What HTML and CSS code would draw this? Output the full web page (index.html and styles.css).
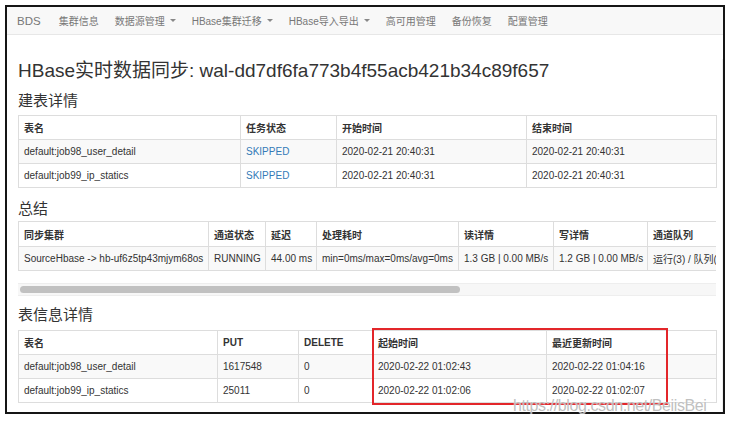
FILE: index.html
```html
<!DOCTYPE html>
<html lang="zh-CN">
<head>
<meta charset="utf-8">
<title>HBase实时数据同步</title>
<link rel="stylesheet" href="styles.css">
</head>
<body>
<div class="frame">
  <nav class="navbar">
    <span class="brand">BDS</span>
    <ul class="nav">
      <li>集群信息</li>
      <li>数据源管理<b class="caret"></b></li>
      <li>HBase集群迁移<b class="caret"></b></li>
      <li>HBase导入导出<b class="caret"></b></li>
      <li>高可用管理</li>
      <li>备份恢复</li>
      <li>配置管理</li>
    </ul>
  </nav>
  <main class="content">
    <h2 class="page-title">HBase实时数据同步: wal-dd7df6fa773b4f55acb421b34c89f657</h2>

    <h3 class="section-title s1">建表详情</h3>
    <table class="grid t1">
      <colgroup><col class="c1a"><col class="c1b"><col class="c1c"><col class="c1d"></colgroup>
      <thead><tr><th>表名</th><th>任务状态</th><th>开始时间</th><th>结束时间</th></tr></thead>
      <tbody>
        <tr class="odd"><td>default:job98_user_detail</td><td><a class="link">SKIPPED</a></td><td>2020-02-21 20:40:31</td><td>2020-02-21 20:40:31</td></tr>
        <tr><td>default:job99_ip_statics</td><td><a class="link">SKIPPED</a></td><td>2020-02-21 20:40:31</td><td>2020-02-21 20:40:31</td></tr>
      </tbody>
    </table>

    <h3 class="section-title s2">总结</h3>
    <div class="scroll-wrap">
      <table class="grid t2">
        <colgroup><col class="c2a"><col class="c2b"><col class="c2c"><col class="c2d"><col class="c2e"><col class="c2f"><col class="c2g"><col class="c2h"></colgroup>
        <thead><tr><th>同步集群</th><th>通道状态</th><th>延迟</th><th>处理耗时</th><th>读详情</th><th>写详情</th><th>通道队列</th><th>同步位点</th></tr></thead>
        <tbody>
          <tr class="odd"><td>SourceHbase -&gt; hb-uf6z5tp43mjym68os</td><td>RUNNING</td><td>44.00 ms</td><td>min=0ms/max=0ms/avg=0ms</td><td>1.3 GB | 0.00 MB/s</td><td>1.2 GB | 0.00 MB/s</td><td>运行(3) / 队列(0) / 完成(0)</td><td>2020-02-22 01:04:16</td></tr>
        </tbody>
      </table>
    </div>
    <div class="scrollbar"><div class="thumb"></div></div>

    <h3 class="section-title s3">表信息详情</h3>
    <div class="table-box">
      <table class="grid t3">
        <colgroup><col class="c3a"><col class="c3b"><col class="c3c"><col class="c3d"><col class="c3e"></colgroup>
        <thead><tr><th>表名</th><th>PUT</th><th>DELETE</th><th>起始时间</th><th>最近更新时间</th></tr></thead>
        <tbody>
          <tr class="odd"><td>default:job98_user_detail</td><td>1617548</td><td>0</td><td>2020-02-22 01:02:43</td><td>2020-02-22 01:04:16</td></tr>
          <tr><td>default:job99_ip_statics</td><td>25011</td><td>0</td><td>2020-02-22 01:02:06</td><td>2020-02-22 01:02:07</td></tr>
        </tbody>
      </table>
      <div class="highlight"></div>
    </div>
  </main>
</div>
<div class="watermark">https://blog.csdn.net/BeiisBei</div>
</body>
</html>
```

FILE: styles.css
```css
* { box-sizing: border-box; }
html, body { margin: 0; padding: 0; background: #fff; }
body {
  font-family: "Liberation Sans", "Noto Sans CJK SC", sans-serif;
  color: #333;
  width: 733px;
  height: 426px;
  position: relative;
  overflow: hidden;
}
.frame {
  margin: 5px 0 0 5px;
  width: 720px;
  height: 409px;
  border: 2px solid #151515;
  overflow: hidden;
  background: #fff;
}
.navbar {
  height: 28px;
  background: #f8f8f8;
  border-bottom: 1px solid #e7e7e7;
  display: flex;
  align-items: center;
  padding-left: 10px;
  color: #777;
}
.brand {
  font-size: 11.5px;
  margin-right: 18px;
}
.nav {
  list-style: none;
  margin: 0;
  padding: 0;
  display: flex;
  gap: 16px;
  font-size: 10px;
}
.nav li { display: flex; align-items: center; white-space: nowrap; }
.caret {
  display: inline-block;
  width: 0;
  height: 0;
  margin-left: 5px;
  border-top: 3px solid #888;
  border-left: 3px solid transparent;
  border-right: 3px solid transparent;
}
.content {
  padding: 0 7px 0 11px;
  border-right: 1px solid #eee;
  height: 377px;
}
.page-title {
  font-size: 19px;
  font-weight: normal;
  line-height: 24px;
  margin: 24px 0 0;
  white-space: nowrap;
  color: #333;
}
.section-title {
  font-size: 15px;
  font-weight: normal;
  line-height: 18px;
  margin: 0;
}
.s1 { margin-top: 9px; margin-bottom: 5px; }
.s2 { margin-top: 12px; margin-bottom: 3px; }
.s3 { margin-top: 10px; margin-bottom: 6px; }

.grid {
  border-collapse: collapse;
  table-layout: fixed;
  font-size: 10px;
  color: #333;
}
.grid th, .grid td {
  border: 1px solid #ddd;
  padding: 0 5px;
  height: 24px;
  text-align: left;
  vertical-align: middle;
  white-space: nowrap;
  overflow: hidden;
}
.grid th { font-weight: bold; }
.grid tr.odd td { background: #f9f9f9; }
.t1, .t3 { width: 698px; }
.t2 { width: 1107px; }
.t2 th { height: 25px; }
.link { color: #337ab7; text-decoration: none; }

.c1a { width: 222px; } .c1b { width: 96px; } .c1c { width: 190px; } .c1d { width: 190px; }
.c2a { width: 190px; } .c2b { width: 57px; } .c2c { width: 51px; } .c2d { width: 142px; }
.c2e { width: 95px; } .c2f { width: 94px; } .c2g { width: 170px; } .c2h { width: 308px; }
.c3a { width: 199px; } .c3b { width: 81px; } .c3c { width: 74px; } .c3d { width: 174px; } .c3e { width: 170px; }

.scroll-wrap {
  width: 698px;
  overflow: hidden;
}
.scrollbar {
  margin-top: 12px;
  width: 698px;
  height: 13px;
  background: #f7f7f7;
  border-top: 1px solid #eee;
  border-bottom: 1px solid #eee;
  padding: 2px 0 0 2px;
}
.thumb {
  width: 440px;
  height: 7px;
  border-radius: 4px;
  background: #c1c1c1;
}
.table-box {
  position: relative;
  width: 698px;
}
.highlight {
  position: absolute;
  left: 354px;
  top: -2px;
  width: 296px;
  height: 77px;
  border: 2.5px solid #e3262a;
}
.watermark {
  position: absolute;
  left: 513px;
  top: 397px;
  font-size: 16px;
  letter-spacing: -0.4px;
  color: rgba(175, 175, 175, 0.8);
  text-shadow: 0 0 1px rgba(255,255,255,0.9);
  white-space: nowrap;
}
```
